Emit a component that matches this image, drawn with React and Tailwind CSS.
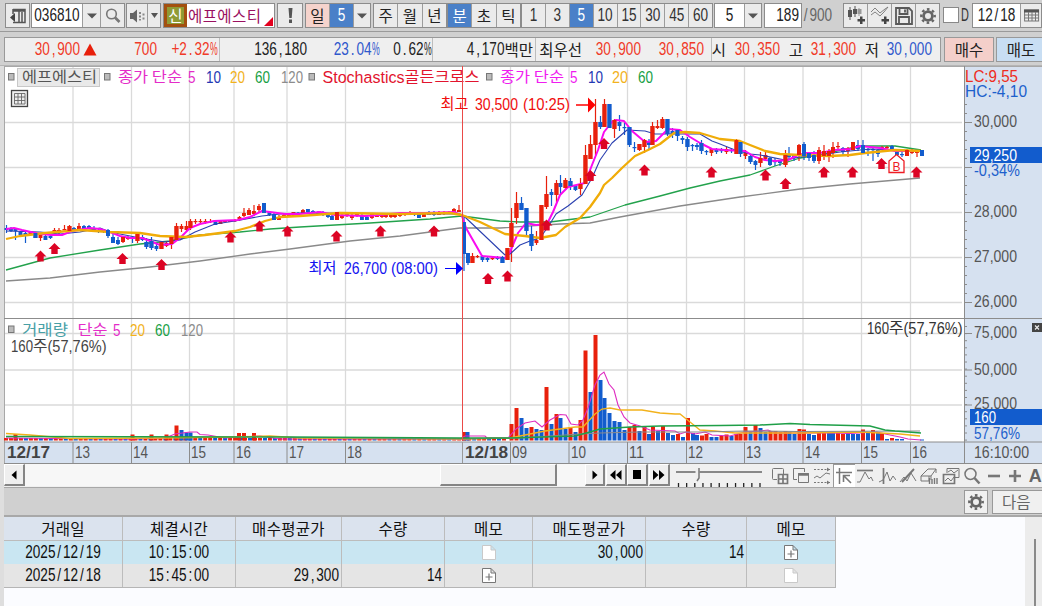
const RED = '#e8200c'
const BLUE = '#125ccd'

const GRID_X = [73, 131.5, 189.5, 234, 287, 345.5, 510.5, 569, 627.5, 686.5, 744.5, 803, 861.5, 910.5]
const PRICE_Y = [122.5, 167.5, 212.5, 257.5, 302.5]
const VOLUME_Y = [333.5, 370, 405]

// x, wick top, wick bottom, body top, body bottom, 1 = up / 0 = down
const CANDLES = [
  [6.5, 225, 233, 228, 230, 0], [11, 227, 232, 229, 231, 0], [15.5, 228, 240, 229, 231, 0], [20.5, 231, 236, 232, 235, 0],
  [25.5, 232, 243, 233, 235, 0], [30.5, 231, 236, 231, 235, 1], [35.5, 232, 238, 233, 238, 0], [40.5, 234, 241, 235, 238, 1],
  [45.5, 235, 240, 236, 240, 0], [50.5, 234, 239, 236, 238, 0], [54.5, 228, 234, 230, 233, 1], [59, 228, 234, 230, 233, 1],
  [64.5, 225, 230, 229, 230, 1], [69.5, 225, 231, 226, 231, 1], [74, 227, 231, 228, 231, 0], [79, 223, 230, 226, 229, 1],
  [84, 225, 230, 226, 229, 0], [89, 225, 229, 226, 229, 0], [94, 226, 232, 228, 231, 0], [98.5, 229, 233, 230, 232, 0],
  [103.5, 229, 233, 230, 232, 0], [108, 229, 238, 230, 236, 0], [113, 234, 243, 237, 243, 0], [118, 237, 245, 240, 244, 0],
  [123, 237, 243, 237, 242, 1], [128, 236, 240, 237, 239, 1], [132.5, 236, 243, 237, 239, 0], [137.5, 232, 243, 234, 241, 1],
  [142.5, 235, 241, 237, 240, 0], [146.5, 238, 249, 242, 247, 0], [151.5, 237, 250, 241, 248, 0], [156.5, 244, 251, 246, 249, 0],
  [161.5, 241, 249, 242, 249, 1], [166.5, 241, 247, 243, 246, 1], [171.5, 237, 249, 237, 244, 1], [176.5, 223, 240, 226, 240, 1],
  [181.5, 224, 232, 226, 229, 1], [186.5, 221, 232, 226, 230, 1], [190.5, 219, 230, 221, 228, 1], [195.5, 219, 224, 221, 222, 1],
  [200.5, 219, 223, 221, 222, 1], [205.5, 219, 224, 221, 222, 1], [210.5, 219, 223, 221, 222, 1], [215.5, 220, 225, 221, 225, 0],
  [220.5, 220, 224, 221, 224, 1], [225, 220, 222, 220, 222, 1], [230, 220, 222, 220, 222, 1], [235, 219, 222, 220, 221, 1],
  [239.5, 216, 221, 217, 220, 1], [244, 208, 217, 213, 216, 1], [249, 208, 215, 210, 215, 1], [254, 205, 216, 211, 214, 1],
  [259, 204, 213, 206, 210, 1], [264, 203, 213, 203, 213, 0], [269.5, 211, 216, 212, 215, 0], [274, 213, 220, 214, 220, 0],
  [279, 215, 220, 217, 220, 1], [284, 213, 217, 215, 216, 1], [289, 213, 217, 214, 216, 1], [293.5, 212, 217, 212, 216, 1],
  [298, 212, 215, 213, 214, 0], [303, 209, 213, 210, 213, 1], [308, 209, 213, 209, 212, 0], [313, 210, 213, 211, 213, 0],
  [318, 211, 215, 212, 215, 0], [323, 211, 216, 213, 215, 0], [328, 213, 218, 214, 217, 0], [332, 214, 220, 216, 220, 0],
  [337, 212, 220, 212, 220, 1], [342, 214, 219, 215, 218, 1], [347, 214, 217, 214, 216, 1], [352, 213, 220, 215, 218, 1],
  [357, 213, 217, 214, 216, 1], [362, 214, 220, 216, 220, 0], [367, 215, 220, 217, 220, 0], [372, 214, 219, 214, 218, 1],
  [377, 214, 217, 215, 217, 1], [382, 214, 218, 215, 217, 1], [386, 214, 218, 215, 217, 1], [391, 214, 218, 215, 217, 1],
  [395, 213, 218, 215, 217, 1], [400, 213, 217, 214, 216, 1], [405, 212, 216, 212, 215, 1], [410, 211, 214, 213, 214, 1],
  [414.5, 212, 216, 213, 215, 0], [419, 213, 218, 214, 218, 0], [424, 212, 217, 213, 217, 1], [429, 211, 215, 212, 215, 0],
  [434, 211, 216, 212, 215, 0], [439, 211, 215, 212, 215, 1], [444, 211, 215, 212, 214, 1], [449, 211, 214, 212, 213, 1],
  [454, 208, 213, 209, 212, 1], [459, 205, 212, 210, 212, 1], [464, 217, 271, 222, 254, 0], [468, 253, 265, 253, 263, 0],
  [472.5, 253, 263, 256, 263, 1], [477.5, 255, 258, 256, 257, 1], [482.5, 255, 262, 256, 260, 0], [487.5, 256, 262, 258, 260, 0],
  [492.5, 257, 260, 258, 259, 1], [497.5, 256, 260, 257, 259, 0], [502.5, 256, 263, 257, 263, 0], [507.5, 248, 260, 248, 260, 1],
  [511.5, 208, 262, 223, 247, 1], [516.5, 192, 224, 203, 218, 1], [521.5, 197, 210, 203, 210, 0], [526.5, 208, 235, 208, 231, 0],
  [531.5, 226, 251, 234, 246, 0], [536.5, 231, 245, 240, 243, 1], [541.5, 205, 240, 205, 240, 1], [546.5, 176, 209, 194, 207, 1],
  [551.5, 189, 206, 192, 195, 0], [556.5, 180, 202, 183, 195, 1], [560.5, 175, 194, 183, 187, 0], [565.5, 178, 190, 180, 188, 1],
  [570.5, 178, 190, 181, 186, 0], [575.5, 185, 191, 186, 190, 0], [580.5, 178, 195, 184, 189, 1], [585.5, 145, 184, 155, 184, 1],
  [590.5, 135, 159, 144, 159, 1], [595.5, 99, 155, 122, 145, 1], [600.5, 116, 129, 122, 127, 0], [604.5, 99, 127, 104, 127, 1],
  [609.5, 104, 128, 104, 128, 0], [614.5, 119, 138, 120, 129, 1], [619.5, 115, 131, 122, 126, 0], [624.5, 122, 135, 127, 128, 0],
  [629.5, 127, 147, 127, 145, 0], [634.5, 142, 152, 147, 148, 0], [639.5, 144, 151, 144, 150, 1], [644.5, 139, 153, 140, 147, 1],
  [649, 139, 150, 142, 145, 0], [652.5, 122, 145, 126, 145, 1], [657.5, 120, 129, 126, 128, 1], [662.5, 117, 129, 119, 128, 1],
  [667.5, 119, 136, 119, 134, 0], [672.5, 128, 138, 131, 134, 0], [677.5, 129, 141, 130, 136, 0], [682.5, 136, 144, 138, 140, 0],
  [687.5, 137, 151, 139, 147, 0], [692.5, 144, 151, 145, 146, 0], [697, 143, 150, 145, 147, 0], [701.5, 140, 154, 143, 151, 0],
  [706.5, 150, 155, 151, 152, 0], [711.5, 149, 156, 149, 153, 1], [716.5, 148, 154, 149, 152, 0], [721.5, 148, 153, 150, 151, 0],
  [726.5, 147, 154, 149, 152, 1], [731.5, 148, 153, 150, 151, 0], [736.5, 139, 154, 140, 154, 1], [740.5, 142, 157, 142, 154, 0],
  [745.5, 150, 159, 153, 156, 1], [750.5, 155, 164, 156, 162, 0], [755.5, 160, 170, 161, 165, 0], [760.5, 152, 167, 158, 163, 1],
  [765.5, 152, 160, 155, 159, 1], [770, 157, 166, 158, 165, 0], [775, 158, 166, 161, 162, 0], [780, 160, 166, 161, 163, 0],
  [785.5, 150, 167, 155, 165, 1], [789, 147, 159, 154, 157, 0], [794, 154, 161, 155, 158, 0], [799, 144, 161, 145, 155, 1],
  [804, 142, 160, 144, 156, 0], [809, 152, 161, 153, 158, 0], [814, 151, 163, 155, 161, 0], [819, 147, 164, 150, 161, 1],
  [824, 145, 160, 151, 156, 1], [829, 149, 162, 151, 156, 1], [833, 142, 158, 147, 153, 1], [838, 142, 150, 146, 147, 1],
  [843, 147, 155, 148, 152, 0], [848, 147, 157, 148, 151, 1], [853, 142, 150, 142, 150, 1], [858, 140, 151, 145, 149, 0],
  [863, 140, 154, 145, 153, 0], [868, 148, 156, 149, 150, 0], [873, 148, 161, 149, 150, 0], [878, 149, 157, 150, 154, 0],
  [882, 146, 149, 147, 148, 1], [887, 146, 149, 147, 148, 1], [892, 145, 151, 146, 150, 0], [897, 151, 157, 152, 155, 0],
  [902, 152, 157, 154, 155, 0], [907, 149, 156, 150, 156, 1], [912, 149, 154, 151, 153, 1], [917, 150, 157, 151, 153, 1],
  [922, 150, 156, 150, 156, 0],
]

// tops of the volume bars that rise above the floor: x, top, up
const VOLUMES = [
  [15.5, 434, 1], [132.5, 434.5, 1], [151.5, 434.5, 1], [166.5, 434.5, 1], [176.5, 425.5, 1], [181.5, 430, 0], [186.5, 432.5, 0],
  [190.5, 432.5, 0], [239, 433, 1], [244, 433, 1], [254, 433, 1], [464, 432, 1], [467.5, 432, 0], [511.5, 424, 1], [516.5, 408, 1],
  [521.5, 418, 0], [526.5, 428, 0], [531.5, 427, 1], [536.5, 429, 0], [541.5, 430, 0], [546.5, 387, 1], [551.5, 424, 0],
  [556.5, 414, 1], [560.5, 418, 0], [565.5, 429, 0], [570.5, 427, 1], [575.5, 432, 0], [580.5, 420, 1], [585.5, 350.5, 1],
  [590.5, 392, 0], [595.5, 335, 1], [600.5, 380, 0], [604.5, 398, 0], [609.5, 413, 0], [614.5, 421, 0], [619.5, 422, 0],
  [624.5, 430, 0], [629.5, 427, 1], [634.5, 425, 1], [639.5, 431, 0], [644.5, 427, 1], [649, 434, 0], [653, 427, 1],
  [658, 431, 0], [663, 426, 1], [668, 433, 0], [673, 435, 0], [678, 434, 1], [683, 437, 0], [688, 418, 1], [693, 433, 0],
  [697, 435, 0], [702, 435.5, 1], [706.5, 434, 1], [711.5, 437, 0], [716.5, 437, 0], [721.5, 436, 1], [726.5, 434.5, 1],
  [731.5, 436, 0], [736.5, 434, 1], [740.5, 434, 1], [745.5, 427, 1], [750.5, 432, 0], [755.5, 425, 1], [760.5, 428, 0],
  [765.5, 432, 0], [770.5, 431, 1], [775.5, 431, 1], [780.5, 432, 1], [785.5, 431, 1], [789.5, 432, 0], [794.5, 434, 0],
  [799.5, 429, 1], [804, 429.5, 1], [809, 434, 0], [814, 435, 0], [819, 433, 1], [824, 432, 1], [829, 433, 0], [833, 433, 0],
  [838, 433, 1], [843, 434, 1], [848, 433, 0], [853, 434, 0], [858, 434, 0], [863, 429.5, 1], [868, 433, 0], [873, 430, 1],
  [878, 432, 0], [882, 433, 1], [887, 439, 0], [892, 438, 1], [897, 439, 0], [902, 439, 0], [922, 439.5, 0],
]

const FLOOR = Array.from({ length: 101 }, (_, i) => [6 + i * 4.98, (i * 7) % 5 < 3])

const MA = {
  gray: '6,281 50,278 100,272 150,267 200,261 250,254 290,249 350,241 400,236 430,232 460,228 500,228 560,224 590,223 620,217 680,206 740,197 800,189 850,184 920,178',
  green: '6,270 50,258 100,250 140,244 170,241 200,235 240,232 270,229 300,227 370,223 430,219 462,216 500,221 520,222 550,222 590,217 625,205 660,196 690,188 720,181 750,175 775,166 800,158 825,154 845,149 865,146 895,146 921,150',
  magenta: '6,229 14,228 22,230 40,234 52,235 62,235 72,231 90,228 100,229 110,232 120,236 130,238 142,238 150,241 160,245 172,244 180,238 190,228 200,224 214,221 238,220 250,217 262,211 270,212 285,214 300,214 320,212 335,215 365,216 380,215 400,213 425,213 455,212 462,216 466,228 482,256 505,258 510,252 518,233 526,223 536,225 547,224 553,212 560,195 568,187 585,183 592,165 598,150 604,132 612,122 616,120 624,121 632,131 645,142 656,141 668,129 680,130 690,137 700,143 712,149 725,150 745,151 755,157 765,160 775,161 788,160 798,155 806,153 820,153 835,150 850,149 860,146 880,148 895,151 921,151',
  navy: '6,231 40,232 60,234 80,232 100,228 110,232 140,238 165,242 180,240 195,232 215,224 235,221 262,216 280,214 300,213 460,214 466,218 505,255 510,254 520,245 530,241 540,238 548,227 556,214 568,206 582,195 592,178 600,160 612,143 627,130 645,131 655,134 700,134 712,141 720,144 735,150 750,154 760,155 785,160 800,157 820,155 840,152 870,149 921,151',
  gold: '6,239 20,236 45,233 80,230 110,232 140,233 160,236 185,237 205,235 235,231 250,227 265,221 280,217 300,216 340,213 400,214 450,213 462,215 480,222 505,234 525,236 540,238 556,235 565,227 580,218 590,207 600,193 604,185 612,178 622,168 635,156 648,150 660,144 674,133 685,132 700,133 710,136 720,139 740,141 750,145 765,151 780,154 800,155 830,156 850,155 865,153 895,150 921,151',
}

const VOL_MA = {
  gold: '6,433.5 30,435 70,438.5 160,438 230,437 270,436 300,438 460,439 510,438 520,436 545,431 575,427 583,427 595,414 602,409 610,408 620,410 642,410 660,413 675,414 680,414 690,422 700,430 715,431 735,433 800,433 860,432 880,433 900,434 920,436',
  magenta: '6,438 60,438.5 130,439 165,438 175,434 190,432 197,432 200,434.5 208,435 225,438 260,436 280,439 460,439 465,436 485,436 487,438 508,438 516,429 525,423 535,421 542,427 550,420 560,414.5 566,415 571,424 578,425 583,420 588,408 595,385 600,375 604,372 609,384 614,390 618,405 624,417 630,423 640,426 650,430 675,431 680,434 686,432 695,434 705,432 712,435 730,436 745,432 760,431 768,430 775,433 830,433 850,433.5 877,432 885,434 900,437 908,439 921,440',
  gray: '290,437.5 460,439 520,438 580,434 600,433 640,432 700,432 745,431 800,431.5 920,431',
  green: '6,436.5 290,437 460,438 510,438 575,436 590,432 600,429 630,427 660,426 720,425.5 760,425 790,423.5 810,424.5 870,426 885,430 895,431 921,433',
}

const ARROWS = [
  [40.5, 250.5], [54.5, 243], [122.5, 253], [161.5, 259], [230.5, 231.5], [259.5, 220.5], [287.5, 225.5], [336.5, 230.5],
  [380.5, 225.5], [434, 225.5], [488, 273], [507.5, 270.5], [546.5, 219.5], [590.5, 170], [604, 138], [644.5, 164.5],
  [711.5, 166.5], [765.5, 169.5], [785.5, 178], [824, 166.5], [852.5, 166.5], [881.5, 158], [916.5, 166.5],
]

const HOURS = [
  [75, '13'], [133, '14'], [191, '15'], [236, '16'], [289, '17'], [347, '18'], [512, '09'], [571, '10'],
  [629, '11'], [688, '12'], [746, '13'], [805, '14'], [863, '15'], [912, '16'],
]

/* ---------- text ---------- */

// tall, narrow digits; punctuation takes a full digit cell
function Num({ children, className = '' }) {
  return (
    <span className={`inline-block whitespace-pre font-['Liberation_Sans',sans-serif] text-[13.6px] leading-[14px] scale-y-[1.3] ${className}`}>
      {String(children).split(/([,.:/%])/).filter(Boolean).map((part, i) => {
        if (part === '%') return <span key={i} className="inline-block w-[7.5px] origin-left scale-x-[0.64]">%</span>
        if (/[,.:/]/.test(part)) return <span key={i} className="inline-block w-[7.5px] text-center">{part}</span>
        return part
      })}
    </span>
  )
}

function Kor({ children, className = '' }) {
  return (
    <span className={`mb-[2px] inline-block whitespace-nowrap font-['Noto_Sans_CJK_KR',sans-serif] text-[15.5px] leading-[18px] ${className}`}>
      {children}
    </span>
  )
}

// digits inside the chart, centred on y
function N({ x, y, w, fill = '#555', bold, children }) {
  return (
    <text
      transform={`translate(${x} ${y + 6.2}) scale(1 1.25)`}
      textLength={w}
      lengthAdjust="spacingAndGlyphs"
      fill={fill}
      fontSize="13.6"
      fontWeight={bold ? 700 : 400}
      fontFamily="Liberation Sans, sans-serif"
    >
      {children}
    </text>
  )
}

function K({ x, y, w, fill, children }) {
  return (
    <text x={x} y={y + 5.2} textLength={w} lengthAdjust="spacingAndGlyphs" fill={fill} fontSize="15" fontFamily="Noto Sans CJK KR, sans-serif">
      {children}
    </text>
  )
}

/* ---------- toolbar ---------- */

function Group({ className = '', children }) {
  return (
    <div className={`flex h-[25px] shrink-0 divide-x divide-[#9c9c9c] border border-[#8c8c8c] bg-[#ebebeb] ${className}`}>
      {children}
    </div>
  )
}

function Cell({ className = '', children }) {
  return <div className={`flex items-center justify-center ${className}`}>{children}</div>
}

function Caret() {
  return (
    <svg width="10" height="6" viewBox="0 0 10 6"><path d="M0 0.5h10L5 5.5z" fill="#555" /></svg>
  )
}

function Gear() {
  return (
    <svg width="18" height="18" viewBox="0 0 18 18" fill="none" stroke="#666">
      <circle cx="9" cy="9" r="4.4" strokeWidth="2.8" />
      <circle cx="9" cy="9" r="6.7" strokeWidth="2.4" strokeDasharray="2.6 2.66" strokeDashoffset="1.3" />
    </svg>
  )
}

function Toolbar() {
  return (
    <div className="flex h-[31px] items-start bg-[#d0d0d0] pt-[3px] pl-[5px]">
      <Group className="w-[25px]">
        <Cell className="flex-1">
          <svg width="16" height="16" viewBox="0 0 16 16" fill="none" stroke="#555">
            <path d="M3 1.5h12v13H3M3 1v5M9 1v14M12 4v10M3 3h12" strokeWidth="1.5" />
            <path d="M0 9.5L5 5v9z" fill="#444" stroke="none" />
          </svg>
        </Cell>
      </Group>
      <Group className="ml-px w-[94px]">
        <Cell className="w-[51px] bg-white text-[#222]"><Num>036810</Num></Cell>
        <Cell className="w-[18px]"><Caret /></Cell>
        <Cell className="flex-1">
          <svg width="16" height="16" viewBox="0 0 16 16" fill="none" stroke="#777">
            <circle cx="6.5" cy="6" r="4.8" strokeWidth="1.6" />
            <path d="M10 9.5l4.5 4.5" strokeWidth="2.6" />
          </svg>
        </Cell>
      </Group>
      <Group className="ml-px w-[35px]">
        <Cell className="w-[21px]">
          <svg width="16" height="14" viewBox="0 0 16 14" fill="#666">
            <path d="M1 4h3l4-3.5v13L4 10H1z" />
            <path d="M10 3h2v2h-2zM10 6.5h2v2h-2zM10 10h2v1.5h-2zM13.500 4.500h2v2h-2zM13.500 8.500h2v2h-2z" fill="#888" />
          </svg>
        </Cell>
        <Cell className="flex-1"><svg width="7" height="5" viewBox="0 0 7 5"><path d="M0 0h7L3.500 5z" fill="#555" /></svg></Cell>
      </Group>
      <Group className="ml-[2px] w-[112px]">
        <Cell className="w-[23px] border-[3px] border-[#a3500f] bg-[#8f9b35] text-white"><Kor>신</Kor></Cell>
        <div className="relative flex flex-1 items-center bg-white pl-px text-[#9a1060]">
          <Kor className="tracking-[0.4px]">에프에스티</Kor>
          <svg className="absolute right-px bottom-px" width="9" height="9" viewBox="0 0 9 9"><path d="M9 0v9H0z" fill="#e3001e" /></svg>
        </div>
      </Group>
      <Group className="ml-[2px] w-[26px]">
        <Cell className="flex-1">
          <svg width="5" height="15" viewBox="0 0 5 15" fill="#555"><path d="M0.500 0h4L3.700 10H1.300zM1 11.500h3V15H1z" /></svg>
        </Cell>
      </Group>
      <Group className="ml-[2px] w-[66px]">
        <Cell className="w-[24px] bg-[#f5d3cc] text-[#222]"><Kor>일</Kor></Cell>
        <Cell className="w-[24px] bg-[#4a80c8] text-white"><Num>5</Num></Cell>
        <Cell className="flex-1"><Caret /></Cell>
      </Group>
      <Group className="ml-[2px] w-[74px]">
        {['주', '월', '년'].map(t => <Cell key={t} className="flex-1 text-[#222]"><Kor>{t}</Kor></Cell>)}
      </Group>
      <Group className="w-[74px]">
        <Cell className="flex-1 bg-[#4a80c8] text-white"><Kor>분</Kor></Cell>
        <Cell className="flex-1 text-[#222]"><Kor>초</Kor></Cell>
        <Cell className="flex-1 text-[#222]"><Kor>틱</Kor></Cell>
      </Group>
      <Group className="w-[192px]">
        {['1', '3', '5', '10', '15', '30', '45', '60'].map(t => (
          <Cell key={t} className={t === '5' ? 'flex-1 bg-[#4a80c8] text-white' : 'flex-1 text-[#333]'}><Num>{t}</Num></Cell>
        ))}
      </Group>
      <Group className="ml-px w-[48px]">
        <Cell className="w-[30px] bg-white text-[#222]"><Num>5</Num></Cell>
        <Cell className="flex-1"><Caret /></Cell>
      </Group>
      <Group className="ml-[2px] w-[38px]">
        <div className="flex flex-1 items-center justify-end bg-white pr-[2px] text-[#222]"><Num>189</Num></div>
      </Group>
      <div className="flex h-[25px] w-[43px] items-center text-[#666]"><Num>/900</Num></div>
      <Group className="w-[97px]">
        <Cell className="flex-1">
          <svg width="20" height="19" viewBox="0 0 20 19" fill="#555">
            <path d="M3.500 1h1v13h-1zM2 4h4v7H2zM8.500 0h1v11h-1zM7 3h4v5H7z" />
            <path d="M12.500 2h1v8h-1zM11.500 3h4v5h-4z" fill="#999" />
            <path d="M14 10.500h2.500V13H19v2.500h-2.500V18H14v-2.500h-2.500V13H14z" fill="#444" />
          </svg>
        </Cell>
        <Cell className="flex-1">
          <svg width="20" height="19" viewBox="0 0 20 19" fill="none" stroke="#777">
            <path d="M1 6l4-4 5 5 5-4 3-2M1 9l4-3 5 4 4-4 4-5" strokeWidth="0.900" />
            <path d="M14 10.500h2.500V13H19v2.500h-2.500V18H14v-2.500h-2.500V13H14z" fill="#444" stroke="none" />
          </svg>
        </Cell>
        <Cell className="flex-1">
          <svg width="18" height="18" viewBox="0 0 18 18" fill="none" stroke="#5a5a5a" strokeWidth="1.800">
            <path d="M1 1h13l3 3v13H1zM4.500 1v6h8V1M4 17v-7h10v7M10 2.500v3" />
          </svg>
        </Cell>
        <Cell className="flex-1"><Gear /></Cell>
      </Group>
      <div className="mt-[4px] ml-[3px] h-4 w-4 border border-[#888] bg-white" />
      <div className="flex h-[25px] w-[14px] items-center justify-center text-[#333]"><Num className="scale-x-[0.8]">D</Num></div>
      <Group className="w-[70px]">
        <Cell className="w-[48px] bg-white text-[#222]"><Num>12/18</Num></Cell>
        <div className="flex items-center pl-[3px]">
          <svg width="16" height="13" viewBox="0 0 16 13" fill="none" stroke="#777">
            <rect x="0.600" y="1" width="14" height="11" />
            <path d="M0 2h15" stroke="#555" strokeWidth="3" />
            <path d="M0 6h15M0 9h15M4.500 3v9M8 3v9M11.500 3v9" />
          </svg>
        </div>
      </Group>
    </div>
  )
}

/* ---------- quote strip ---------- */

const Rule = () => <div className="h-full w-px bg-[#bdbdbd]" />

function Right({ className = '', children }) {
  return <div className={`flex shrink-0 items-center justify-end ${className}`}>{children}</div>
}

function QuoteBar() {
  return (
    <div className="flex h-[34px] border-t border-[#9a9a9a] bg-[#d0d0d0] pt-[5px] pl-[4px]">
      <div className="flex h-[25px] w-[937px] shrink-0 items-center border border-[#999] bg-[#efefef] text-[#222]">
        <Right className="w-[75px] text-[#f03a28]"><Num>30,900</Num></Right>
        <svg className="ml-[3px]" width="14" height="13" viewBox="0 0 14 13"><path d="M7 0.500L13.500 12.500H0.500z" fill={RED} /></svg>
        <Right className="w-[60px] text-[#f03a28]"><Num>700</Num></Right>
        <Right className="w-[60px] text-[#f03a28]"><Num>+2.32%</Num></Right>
        <Right className="w-[2px]" />
        <Rule />
        <Right className="w-[87px]"><Num>136,180</Num></Right>
        <Right className="w-[72px] text-[#2f58cc]"><Num>23.04%</Num></Right>
        <Right className="w-[52px]"><Num>0.62%</Num></Right>
        <Right className="w-[1px]" />
        <Rule />
        <Right className="w-[100px] gap-0"><Num>4,170</Num><Kor>백만</Kor></Right>
        <Right className="w-[2px]" />
        <Rule />
        <Right className="w-[46px]"><Kor>최우선</Kor></Right>
        <Right className="w-[59px] text-[#f03a28]"><Num>30,900</Num></Right>
        <Right className="w-[63px] text-[#f03a28]"><Num>30,850</Num></Right>
        <Right className="w-[7px]" />
        <Rule />
        <Right className="w-[14px]"><Kor>시</Kor></Right>
        <Right className="w-[54px] text-[#f03a28]"><Num>30,350</Num></Right>
        <Right className="w-[23px]"><Kor>고</Kor></Right>
        <Right className="w-[53px] text-[#f03a28]"><Num>31,300</Num></Right>
        <Right className="w-[23px]"><Kor>저</Kor></Right>
        <Right className="w-[53px] text-[#2f58cc]"><Num>30,000</Num></Right>
      </div>
      <div className="ml-[3px] flex h-[25px] w-[50px] shrink-0 items-center justify-center border border-[#999] bg-[#f4cfca] text-[#222]"><Kor>매수</Kor></div>
      <div className="ml-[2px] flex h-[25px] w-[50px] shrink-0 items-center justify-center border border-[#999] bg-[#c8def3] text-[#222]"><Kor>매도</Kor></div>
    </div>
  )
}

/* ---------- chart ---------- */

function Bullet({ x, y }) {
  return <rect x={x} y={y} width="5.500" height="6.500" fill="#bbb" stroke="#777" />
}

function Chart() {
  return (
    <svg className="block shrink-0" width="1038" height="398" viewBox="4 66 1038 398">
      <rect x="4" y="66" width="1038" height="398" fill="#fff" />
      <rect x="964" y="66" width="78" height="398" fill="#d6e1f0" />
      <rect x="4" y="442" width="1038" height="22" fill="#d6e1f0" />

      <g stroke="#dadada" strokeWidth="1.300">
        {GRID_X.map(x => <path key={x} d={`M${x} 66V441`} />)}
        {[...PRICE_Y, ...VOLUME_Y].map(y => <path key={y} d={`M4 ${y}H962`} />)}
      </g>
      <g stroke="#8c8c8c">
        <path d="M4 66.500H1042M4.500 66V464" stroke="#a8a8a8" />
        <path d="M4 318.500H1042M4 442H1042M4 463.500H1042M964.500 66V463" />
        {GRID_X.map(x => <path key={x} d={`M${x} 442V463`} />)}
        {PRICE_Y.map(y => <path key={y} d={`M964 ${y}h8`} />)}
        {VOLUME_Y.map(y => <path key={y} d={`M964 ${y}h8`} />)}
        {Array.from({ length: 23 }, (_, i) => <path key={i} d={`M964 ${104.500 + i * 9}h3`} />)}
        {Array.from({ length: 17 }, (_, i) => <path key={i} d={`M964 ${326.500 + i * 7.100}h3`} />)}
      </g>

      {/* legend of the price panel */}
      <Bullet x={8.500} y={73.500} />
      <rect x="17.500" y="68.500" width="82" height="18" fill="#e9e9e9" stroke="#c8c8c8" />
      <K x={22} y={77} w={75} fill="#555">에프에스티</K>
      <Bullet x={104.500} y={73.500} />
      <K x={118} y={77} w={64} fill="#e42cc8">종가 단순</K>
      <N x={188} y={77} w={7.500} fill="#e42cc8">5</N>
      <N x={206} y={77} w={15} fill="#2338b4">10</N>
      <N x={230} y={77} w={15} fill="#f2b21c">20</N>
      <N x={255} y={77} w={15} fill="#17a045">60</N>
      <N x={281} y={77} w={22} fill="#8c8c8c">120</N>
      <Bullet x={309} y={73.500} />
      <N x={322.500} y={77} w={82} fill="#e2142e">Stochastics</N>
      <K x={404.500} y={77} w={75} fill="#e2142e">골든크로스</K>
      <Bullet x={486.500} y={73.500} />
      <K x={500} y={77} w={64} fill="#f01cf0">종가 단순</K>
      <N x={570} y={77} w={7.500} fill="#f01cf0">5</N>
      <N x={588} y={77} w={15} fill="#2338b4">10</N>
      <N x={612} y={77} w={16} fill="#f2b21c">20</N>
      <N x={638} y={77} w={15} fill="#17a045">60</N>
      <g fill="none" stroke="#444">
        <rect x="11.500" y="90.500" width="16" height="16" fill="#eee" strokeWidth="1.300" />
        <path d="M14.500 93.500h10.500v10.500h-10.500zM14.500 97h10.500M14.500 100.500h10.500M18 93.500v10.500M21.500 93.500v10.500" stroke="#666" strokeWidth="0.900" />
      </g>

      {/* volume bars */}
      {FLOOR.map(([x, up]) => <rect key={x} x={x - 2} y="438" width="4" height="2.500" fill={up ? RED : BLUE} />)}
      {VOLUMES.map(([x, top, up]) => <rect key={x} x={x - 2} y={top} width="4" height={440.500 - top} fill={up ? RED : BLUE} />)}
      <g fill="none">
        <polyline points={VOL_MA.magenta} stroke="#de2cc0" strokeWidth="1.100" />
        <polyline points={VOL_MA.gold} stroke="#f2b21c" strokeWidth="1.300" />
        <polyline points={VOL_MA.gray} stroke="#8a8a8a" strokeWidth="1.200" />
        <polyline points={VOL_MA.green} stroke="#1f9f48" strokeWidth="1.500" />
      </g>

      {/* moving averages and candles */}
      <g fill="none" strokeLinejoin="round">
        <polyline points={MA.gray} stroke="#8a8a8a" strokeWidth="1.300" />
        <polyline points={MA.green} stroke="#23a24c" strokeWidth="1.300" />
      </g>
      {CANDLES.map(([x, wt, wb, bt, bb, up]) => (
        <g key={x} fill={up ? RED : BLUE}>
          <rect x={x - 0.600} y={wt} width="1.200" height={wb - wt} />
          <rect x={x - 2} y={bt} width="3.900" height={Math.max(1.200, bb - bt)} />
        </g>
      ))}
      <g fill="none" strokeLinejoin="round">
        <polyline points={MA.navy} stroke="#2b40b0" strokeWidth="1.100" />
        <polyline points={MA.magenta} stroke="#fa0af0" strokeWidth="2" />
        <polyline points={MA.gold} stroke="#f0ac08" strokeWidth="2.300" />
      </g>
      {/* tall bodies stay in front of the averages */}
      {CANDLES.map(([x, , , bt, bb, up]) => bb - bt > 4.500 && (
        <rect key={x} x={x - 2} y={bt} width="3.900" height={bb - bt} fill={up ? RED : BLUE} />
      ))}
      {ARROWS.map(([x, y]) => (
        <path key={x} d={`M${x} ${y}l6 6h-2.800v5h-6.400v-5h-2.800z`} fill="#dc0424" />
      ))}
      <path d="M896.500 154.500l7.500 6.500v11.500h-15v-11.500z" fill="#fff" stroke="#ee1c24" strokeWidth="1.300" />
      <text x="892.600" y="171" fontSize="12" fill="#ee1c24" fontFamily="Liberation Sans, sans-serif">B</text>

      <path d="M462.500 66V441" stroke="#ea4a48" />
      <path d="M462.500 442V463" stroke="#999" />

      <K x={440.500} y={104} w={28} fill="#f00d0d">최고</K>
      <N x={475} y={104} w={43} fill="#f00d0d">30,500</N>
      <N x={523} y={104} w={47} fill="#f00d0d">(10:25)</N>
      <path d="M576 104.500h12v-7l7.500 7.500-7.500 7.500v-7h-12z" fill="#f00" />
      <path d="M576 105h12" stroke="#f00" />
      <K x={308.500} y={268} w={28} fill="#1414f0">최저</K>
      <N x={344} y={268} w={43} fill="#1414f0">26,700</N>
      <N x={391} y={268} w={47} fill="#1414f0">(08:00)</N>
      <path d="M456 262l7 6.500-7 6.500z" fill="#00f" />
      <path d="M445 268.500h12" stroke="#00f" />

      {/* legend of the volume panel */}
      <Bullet x={8.500} y={326} />
      <K x={22} y={329.500} w={46} fill="#48a0a6">거래량</K>
      <K x={77.500} y={329.500} w={30} fill="#e42cc8">단순</K>
      <N x={113} y={329.500} w={7.500} fill="#e42cc8">5</N>
      <N x={130} y={329.500} w={15} fill="#f2b21c">20</N>
      <N x={155} y={329.500} w={15} fill="#17a045">60</N>
      <N x={181} y={329.500} w={22} fill="#8c8c8c">120</N>
      <N x={11} y={346} w={22} fill="#444">160</N>
      <K x={33} y={346} w={14.500} fill="#444">주</K>
      <N x={47.500} y={346} w={59} fill="#444">(57,76%)</N>
      <N x={867} y={328} w={22} fill="#333">160</N>
      <K x={889} y={328} w={14.500} fill="#333">주</K>
      <N x={903.500} y={328} w={59} fill="#333">(57,76%)</N>

      {/* price axis */}
      <N x={965} y={75.500} w={53} fill="#ee2c20">LC:9,55</N>
      <N x={965} y={91} w={62} fill="#1c60cc">HC:-4,10</N>
      <N x={974} y={121} w={43}>30,000</N>
      <rect x="970" y="147" width="72" height="16" fill="#125ccd" />
      <N x={974} y={154.500} w={43} fill="#fff">29,250</N>
      <N x={974} y={170} w={46} fill="#1c60cc">-0,34%</N>
      <N x={974} y={211} w={43}>28,000</N>
      <N x={974} y={256} w={43}>27,000</N>
      <N x={974} y={301} w={43}>26,000</N>
      <N x={974} y={332} w={43}>75,000</N>
      <N x={974} y={368.500} w={43}>50,000</N>
      <N x={974} y={403} w={43}>25,000</N>
      <rect x="970" y="409" width="72" height="16" fill="#125ccd" />
      <N x={974} y={417} w={22} fill="#fff">160</N>
      <N x={974} y={432.500} w={46} fill="#1c60cc">57,76%</N>
      <rect x="1032" y="323" width="10" height="9" fill="#444" />
      <path d="M1035 325.500l4 4M1039 325.500l-4 4" stroke="#eee" strokeWidth="1.100" fill="none" />

      {/* time axis */}
      <N x={7} y={452} w={43} fill="#444" bold>12/17</N>
      <N x={465} y={452} w={43} fill="#444" bold>12/18</N>
      {HOURS.map(([x, t]) => <N key={x} x={x} y={452} w={15}>{t}</N>)}
      <N x={974} y={452} w={55}>16:10:00</N>
    </svg>
  )
}

/* ---------- scroll row ---------- */

function Bevel({ className = '', children }) {
  return (
    <div className={`flex h-[22px] shrink-0 items-center justify-center border-r-2 border-b-2 border-l border-t border-r-[#858585] border-b-[#858585] border-l-white border-t-white bg-[#efefef] ${className}`}>
      {children}
    </div>
  )
}

const TOOLS = [
  <><path d="M6 12.500H2.500q-1 0-1-1v-9q0-1 1-1h9q1 0 1 1V7" /><path d="M7.500 7.500h9v9h-9zM12 7.500v9M7.500 12h9" strokeWidth="1.700" /></>,
  <><path d="M5 12.500H1.500v-11h11V5" /><path d="M6.500 6.500h10v9h-10z" /><path d="M6 7.500h11" strokeWidth="2.500" /></>,
  <><path d="M1 2.500h16M1 15.500h16" strokeDasharray="2 1.500" /><path d="M1 11l3-2 3 2 6-5 4 1" /><path d="M14 0.500v4l3-2zM14 13.500v4l3-2z" fill="#777" stroke="none" /></>,
  <><path d="M1 5.500h16M4.500 1v16" strokeWidth="1.500" /><path d="M9 9l7 7M8.500 15V8.500H15" strokeWidth="1.600" /></>,
  <><path d="M1 3.500h16" strokeWidth="1.700" /><path d="M1 15h3l5-10 4 7 2-2 2 4" /></>,
  <><path d="M5.500 1v16" strokeWidth="1.700" /><path d="M1 15l4-2 4-8 3 9 3-5 3 4" /></>,
  <><path d="M3 15L15 2" strokeWidth="1.900" /><path d="M1 15l4-5 3 4 4-8 5 8" /></>,
  <><path d="M1 9l7-7h8l-5 7zM1 9v5h8V9M11 9v4M16 2v4" /><path d="M9.500 17v-6M12 17v-5M14.500 17v-6M17 17v-6" strokeWidth="1.400" /></>,
  <><path d="M5 6V1.500h12v9h-4" /><path d="M6 5l3-2 3 3 4-3" /><path d="M1.500 7.500h11v9h-11z" strokeWidth="1.700" /><path d="M3 14l3-3 3 3 3-4" /></>,
  <><circle cx="7.500" cy="7" r="5.500" strokeWidth="1.500" /><path d="M11.500 11l5 5.500" strokeWidth="2.500" /></>,
  <path d="M3 9h12" strokeWidth="2.600" />,
  <path d="M3 9h12M9 3v12" strokeWidth="2.600" />,
]

function ScrollRow() {
  return (
    <div className="flex h-[23px] shrink-0 items-start overflow-hidden bg-[#f0f0f0]">
      <Bevel className="w-[21px]"><svg width="6" height="10" viewBox="0 0 6 10"><path d="M5.500 0.500v9L0.500 5z" /></svg></Bevel>
      <div className="h-[22px] w-[415px] shrink-0 bg-[#f7f7f7]" />
      <Bevel className="w-[117px]" />
      <div className="h-[22px] w-[28px] shrink-0 bg-[#f7f7f7]" />
      <Bevel className="w-[20px]"><svg width="6" height="10" viewBox="0 0 6 10"><path d="M0.500 0.500v9L5.500 5z" /></svg></Bevel>
      <Bevel className="ml-px w-[21px]"><svg width="12" height="10" viewBox="0 0 12 10"><path d="M5.500 0v10L0 5zM11.500 0v10L6 5z" /></svg></Bevel>
      <Bevel className="w-[21px]"><svg width="8" height="9" viewBox="0 0 8 9"><path d="M0 0h8v9H0z" /></svg></Bevel>
      <Bevel className="ml-px w-[21px]"><svg width="12" height="10" viewBox="0 0 12 10"><path d="M0 0v10L5.500 5zM6 0v10L11.500 5z" /></svg></Bevel>
      <svg className="ml-[6px] shrink-0" width="88" height="23" viewBox="0 0 88 23">
        <path d="M0 8h86" stroke="#888" strokeWidth="2" />
        <rect x="19.500" y="4.500" width="4" height="12" fill="#eee" />
        <path d="M23 4v10l-2 3" stroke="#777" fill="none" strokeWidth="1.500" />
        {Array.from({ length: 11 }, (_, i) => <path key={i} d={`M${2.500 + i * 8.150} 19v4`} stroke="#222" strokeWidth="1.300" />)}
      </svg>
      <div className="ml-[5px] flex">
        {TOOLS.map((icon, i) => (
          <div key={i} className={`flex h-[23px] w-[21.4px] shrink-0 items-center justify-center ${i === 3 ? 'border-t border-l border-[#999] bg-white' : ''}`}>
            <svg width="18" height="18" viewBox="0 0 18 18" fill="none" stroke="#777">{icon}</svg>
          </div>
        ))}
        <span className="pl-[3px] font-['Liberation_Sans',sans-serif] text-[18px] leading-[24px] font-bold text-[#666]">A</span>
      </div>
    </div>
  )
}

/* ---------- trade table ---------- */

function Memo({ filled }) {
  return (
    <svg width="14" height="15" viewBox="0 0 14 15" fill="#fff" stroke={filled ? '#777' : '#c9c9c9'}>
      <path d="M0.500 0.500h8.500l4.500 4.500v9.500h-13zM9 0.500v4.500h4.500" />
      {filled && <path d="M3.500 9h7M7 5.500v7" strokeWidth="1.200" />}
    </svg>
  )
}

const COLS = ['거래일', '체결시간', '매수평균가', '수량', '메모', '매도평균가', '수량', '메모']
const GRID = 'grid grid-cols-[119px_113px_106px_103px_88px_113px_101px_88px] divide-x divide-[#bcbcbc]'
const ROWS = [
  ['2025/12/19', '10:15:00', '', '', false, '30,000', '14', true],
  ['2025/12/18', '15:45:00', '29,300', '14', true, '', '', false],
]

function Trades() {
  return (
    <div className="w-[832px] self-start border-r border-b border-[#b5b5b5] text-[#111]">
      <div className={`${GRID} h-[24px] border-b border-[#bcbcbc] bg-[#dbe3ee]`}>
        {COLS.map((c, i) => <Cell key={i}><Kor className="tracking-[0.300px]">{c}</Kor></Cell>)}
      </div>
      {ROWS.map((row, r) => (
        <div key={r} className={`${GRID} ${r === 0 ? 'h-[23px] bg-[#c9e6f2]' : 'h-[23px] bg-[#e5e5e5]'}`}>
          {row.map((v, i) => {
            if (typeof v === 'boolean') return <Cell key={i}><Memo filled={v} /></Cell>
            return (
              <div key={i} className={`flex items-center ${i < 2 ? 'justify-center' : 'justify-end pr-[2px]'}`}>
                {v && <Num>{v}</Num>}
              </div>
            )
          })}
        </div>
      ))}
    </div>
  )
}

export default function App() {
  return (
    <div className="flex h-[606px] w-[1042px] flex-col overflow-hidden bg-[#dedede]">
      <Toolbar />
      <QuoteBar />
      <div className="h-px shrink-0 bg-[#b5b5b5]" />
      <div className="flex min-h-0 flex-1 flex-col pl-[4px]">
        <Chart />
        <ScrollRow />
        <div className="flex h-[30px] shrink-0 items-start border-t border-b-2 border-[#a8a8a8] bg-[#d0d0d0] pt-[2px]">
          <div className="ml-[960px] flex h-[24px] w-[24px] shrink-0 items-center justify-center border border-[#999] bg-[#f0f0f0]"><Gear /></div>
          <div className="ml-[4px] flex h-[24px] w-[54px] shrink-0 items-center border border-[#999] bg-[#f0f0f0] pl-[9px] text-[#666]"><Kor>다음</Kor></div>
        </div>
        <div className="flex min-h-0 flex-1 bg-[#fbfcff]">
          <Trades />
          <div className="ml-auto flex w-[17px] justify-center bg-[#ececec] pt-[22px] pl-[2px]">
            <div className="w-[2px] bg-[#8a8a8a]" />
          </div>
        </div>
      </div>
    </div>
  )
}
